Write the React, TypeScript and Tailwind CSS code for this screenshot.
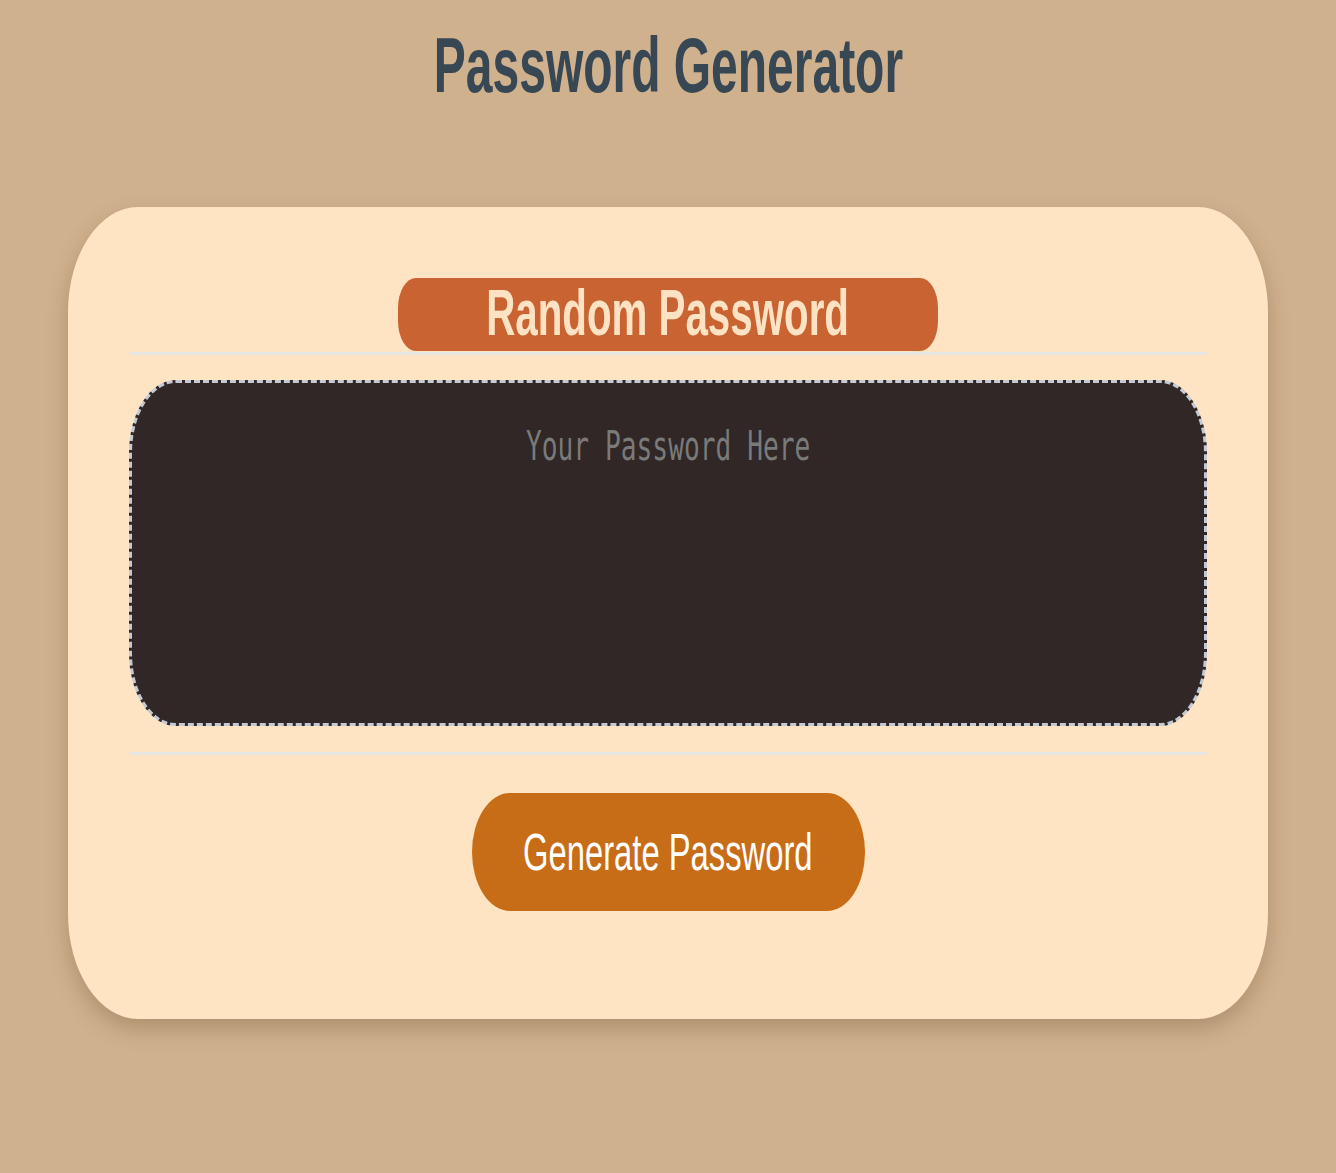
export default function App() {
  return (
    <div className="min-h-screen bg-[#d0b18e] flex flex-col items-center font-['Liberation_Sans',Arial,sans-serif]">
      {/* Title */}
      <h1 className="mt-[26px] text-[78px] leading-none font-bold text-[#374754]">
        <span className="inline-block whitespace-nowrap scale-x-[0.615]">Password Generator</span>
      </h1>

      {/* Card */}
      <div className="mt-[103px] w-[1200px] h-[812px] bg-[#ffe4c4] rounded-[70px/105px] shadow-[0_10px_22px_rgba(90,60,30,0.28)] pt-[71px] px-[61px] flex flex-col items-center">
        <div className="w-[540px] h-[73px] bg-[#c96332] rounded-[18px/30px] flex items-center justify-center pb-1">
          <span className="inline-block whitespace-nowrap text-[65px] leading-none font-bold text-[#fde3c4] scale-x-[0.62]">
            Random Password
          </span>
        </div>

        <div className="w-full h-[3px] mt-px bg-[#e7e6e2]" />

        {/* Password box */}
        <div className="mt-[25px] w-full h-[346px] bg-[#302726] border-[3px] border-dashed border-[#c3cad3] rounded-[47px/73px] pt-[43px] flex justify-center">
          <span className="inline-block h-fit whitespace-nowrap font-['DejaVu_Sans_Mono',monospace] text-[41px] leading-none text-[#7a7a7a] scale-x-[0.64]">
            Your Password Here
          </span>
        </div>

        <div className="w-full h-[3px] mt-[26px] bg-[#e7e6e2]" />

        <button className="mt-[38px] w-[393px] h-[118px] bg-[#c76c17] rounded-[38px/59px] flex items-center justify-center">
          <span className="inline-block whitespace-nowrap text-[52px] leading-none text-white scale-x-[0.63]">
            Generate Password
          </span>
        </button>
      </div>
    </div>
  );
}
